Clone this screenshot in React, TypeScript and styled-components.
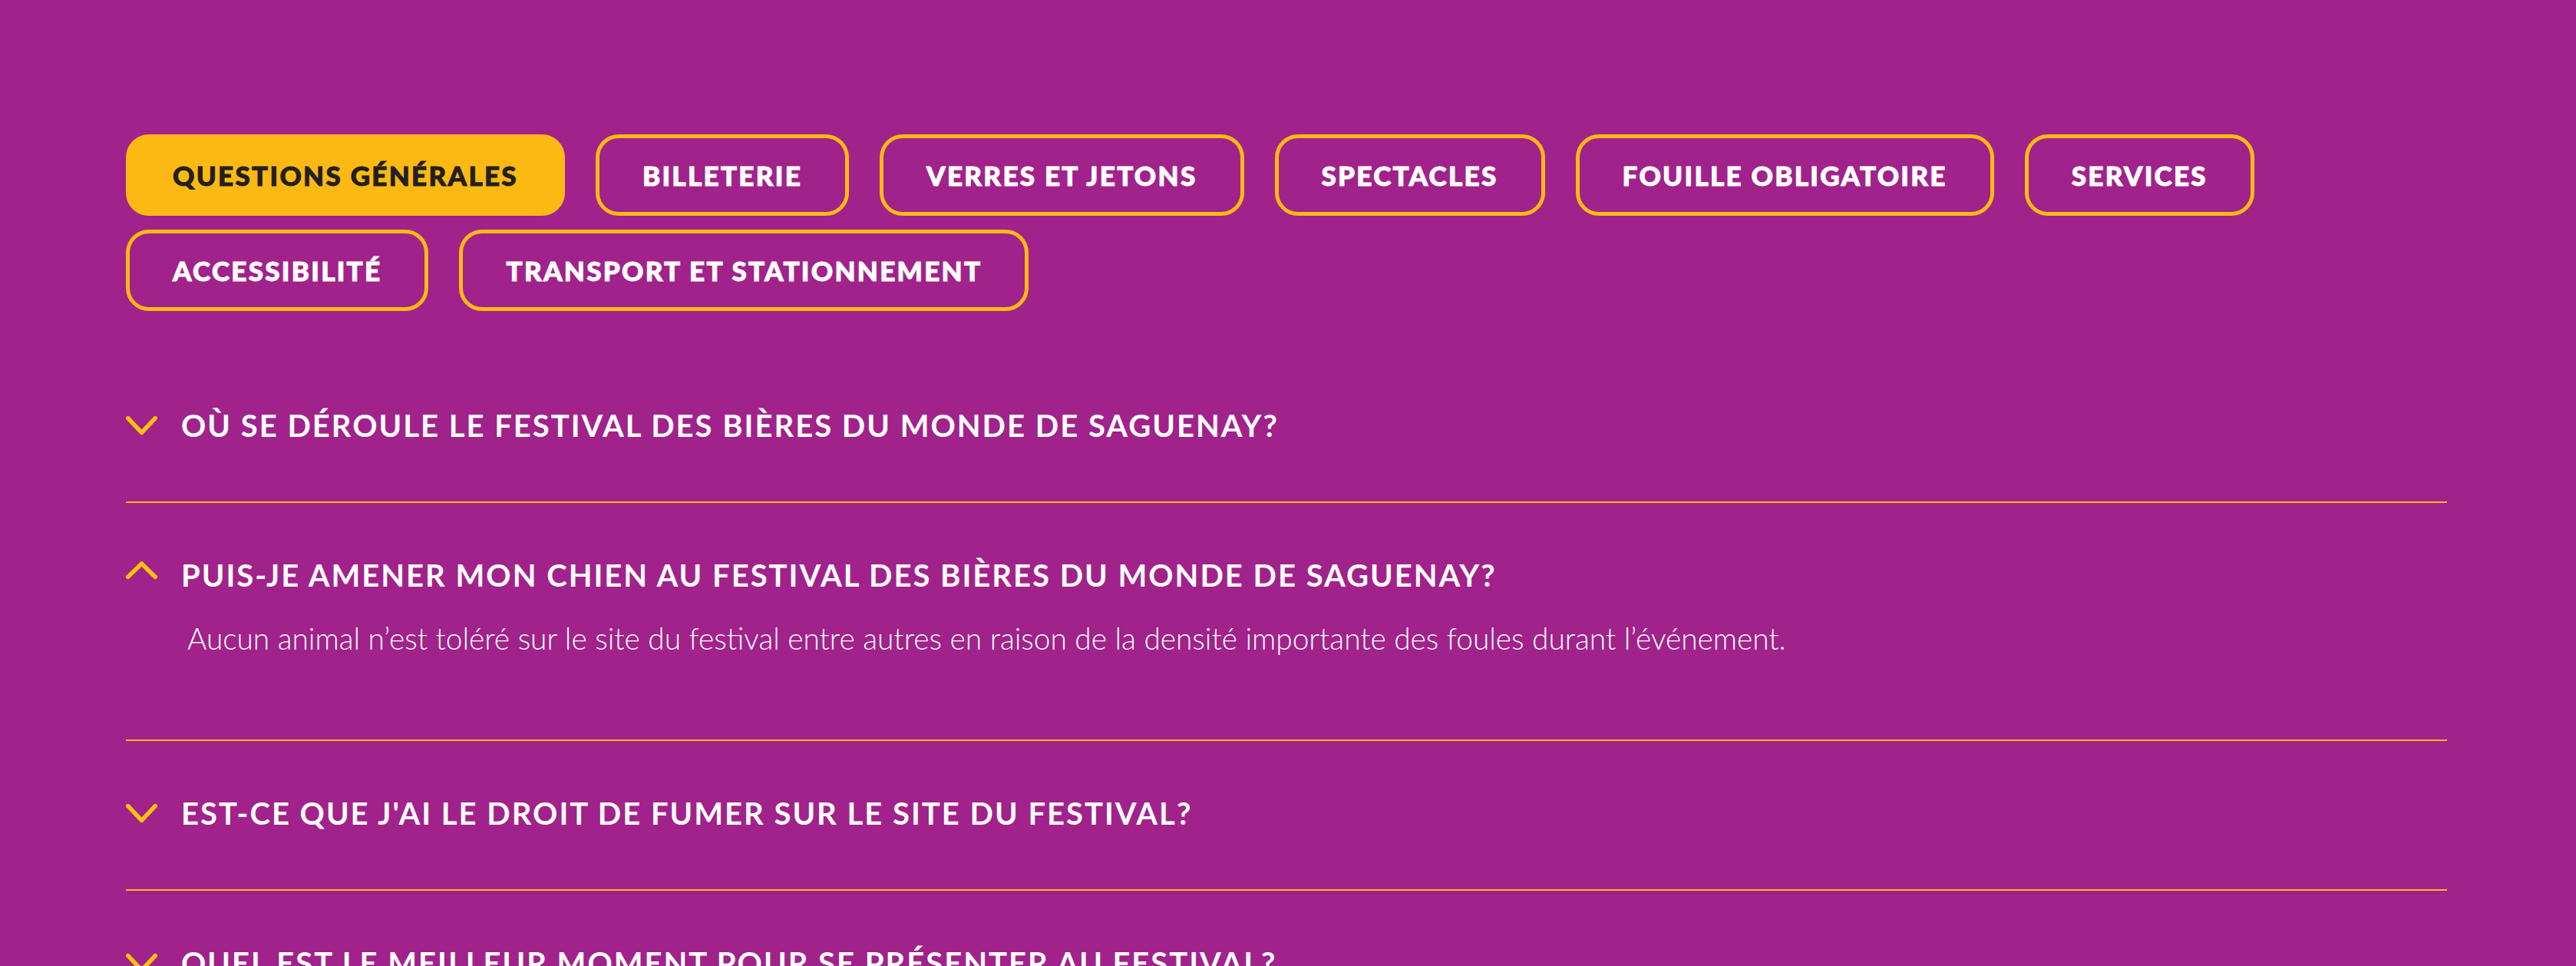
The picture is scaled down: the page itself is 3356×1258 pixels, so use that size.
import styled, { createGlobalStyle } from "styled-components"

const GlobalStyle = createGlobalStyle`
  body {
    margin: 0;
    background-color: #a1228b;
    font-family: "Lato", "Liberation Sans", sans-serif;
  }
`

const Page = styled.div`
  padding: 175px 0 0 164px;
  width: 3024px;
`

const Tabs = styled.div`
  display: flex;
  flex-wrap: wrap;
  column-gap: 40px;
  row-gap: 18px;
  margin-bottom: 55px;
`

const Tab = styled.button<{ $active?: boolean }>`
  box-sizing: border-box;
  height: 106px;
  padding: 0 56px;
  display: flex;
  align-items: center;
  border: 5px solid #fdb913;
  border-radius: 30px;
  background-color: ${(p) => (p.$active ? "#fdb913" : "transparent")};
  color: ${(p) => (p.$active ? "#231f20" : "#ffffff")};
  font-family: "Lato", "Liberation Sans", sans-serif;
  font-weight: 900;
  font-size: 35px;
  letter-spacing: 2.3px;
  -webkit-text-stroke: 1px currentColor;
  text-transform: uppercase;
  cursor: pointer;
`

const Accordion = styled.div`
  display: flex;
  flex-direction: column;
`

const Item = styled.div`
  border-bottom: 2px solid #fdb913;
  padding: 70px 0 75px;
`

const Question = styled.div`
  display: flex;
  align-items: center;
  gap: 31px;
  color: #ffffff;
  font-weight: 700;
  font-size: 40px;
  line-height: 48px;
  letter-spacing: 2px;
  text-transform: uppercase;
`

const Answer = styled.p`
  margin: 0;
  padding: 30px 0 28px 80px;
  color: #ffffff;
  font-weight: 300;
  font-size: 38.8px;
  line-height: 57px;
`

const Chevron = ({ open }: { open: boolean }) => (
  <svg width="41" height="36" viewBox="0 0 41 36" fill="none">
    <path
      d={open ? "M2.8 20.2 L20.5 3 L38.2 20.2" : "M2.8 8.6 L20.5 27.4 L38.2 8.6"}
      stroke="#ffc20e"
      strokeWidth="5.6"
      strokeLinecap="round"
      strokeLinejoin="round"
    />
  </svg>
)

const tabs = [
  "Questions générales",
  "Billeterie",
  "Verres et jetons",
  "Spectacles",
  "Fouille obligatoire",
  "Services",
  "Accessibilité",
  "Transport et stationnement",
]

const faq = [
  { q: "Où se déroule le festival des bières du monde de Saguenay?" },
  {
    q: "Puis-je amener mon chien au festival des bières du monde de Saguenay?",
    a: "Aucun animal n’est toléré sur le site du festival entre autres en raison de la densité importante des foules durant l’événement.",
  },
  { q: "Est-ce que j'ai le droit de fumer sur le site du festival?" },
  { q: "Quel est le meilleur moment pour se présenter au festival?" },
]

const App = () => (
  <Page>
    <GlobalStyle />
    <Tabs>
      {tabs.map((t, i) => (
        <Tab key={t} $active={i === 0}>
          {t}
        </Tab>
      ))}
    </Tabs>
    <Accordion>
      {faq.map((f) => (
        <Item key={f.q}>
          <Question>
            <Chevron open={!!f.a} />
            {f.q}
          </Question>
          {f.a && <Answer>{f.a}</Answer>}
        </Item>
      ))}
    </Accordion>
  </Page>
)

export default App
